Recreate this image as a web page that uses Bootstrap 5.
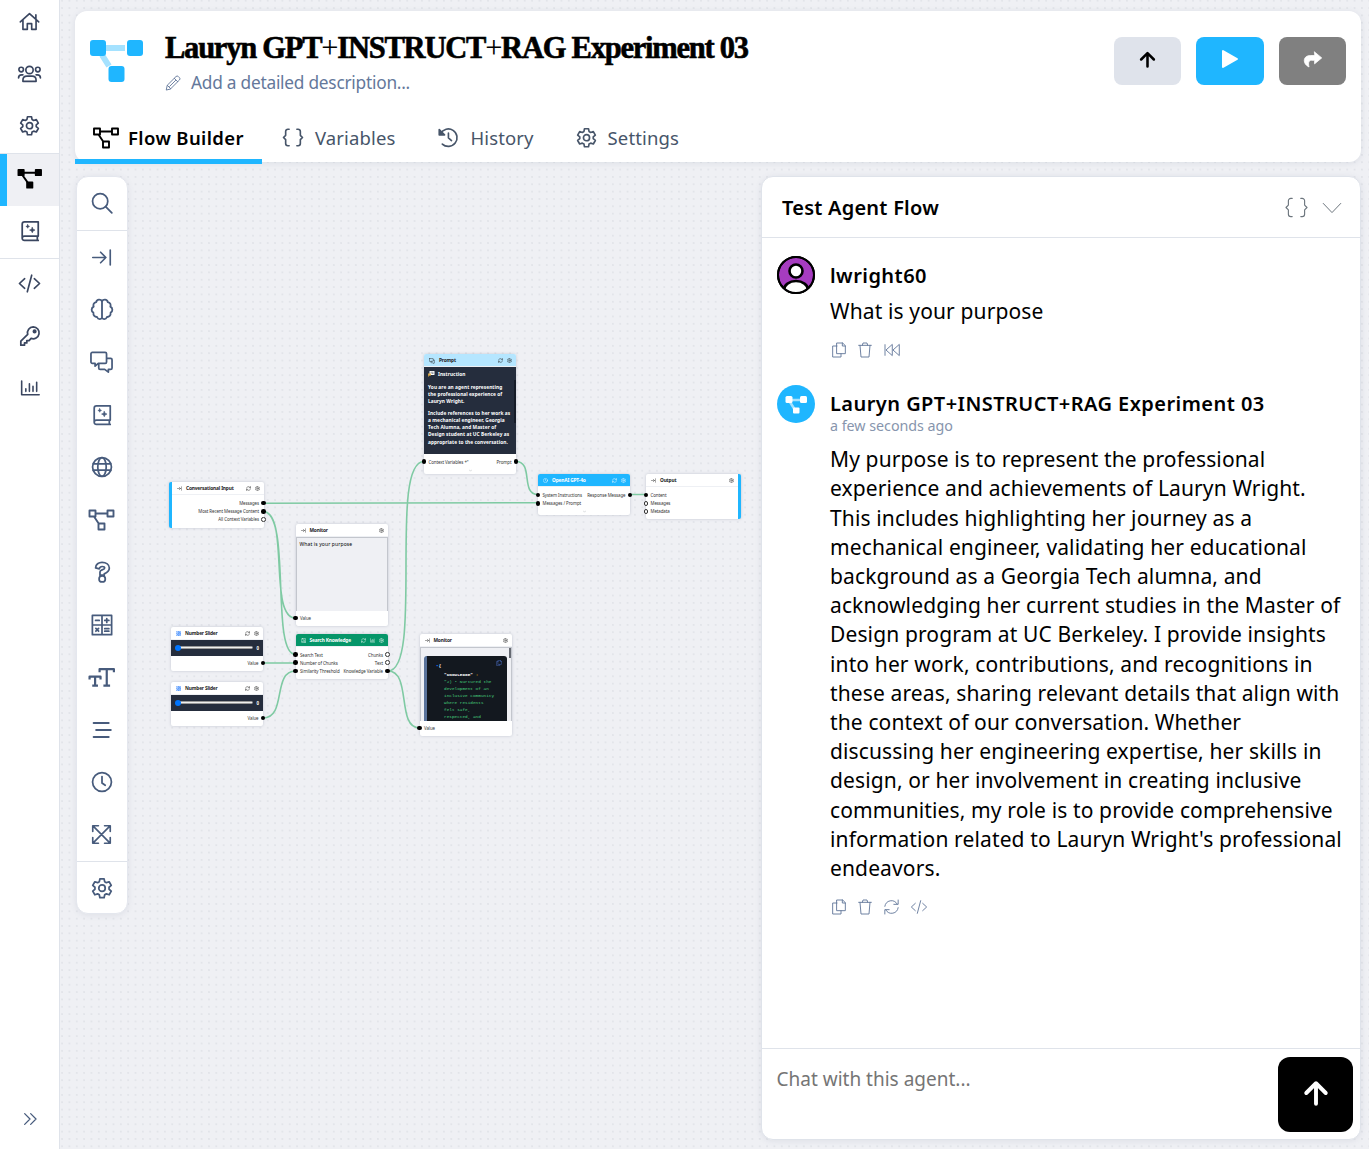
<!DOCTYPE html>
<html lang="en">
<head>
<meta charset="utf-8">
<title>Agent Flow Builder</title>
<link href="https://cdn.jsdelivr.net/npm/bootstrap@5.3.0/dist/css/bootstrap.min.css" rel="stylesheet">
<style>
  :root { --sky: #1fb6ff; --ink: #475569; --line: #dfe3ea; --canvas: #eff0f4; }
  body { font-family: "Noto Sans", Roboto, sans-serif; color: #000; height: 1149px; overflow: hidden; background: var(--canvas); }
  svg.ico { fill: none; stroke: currentColor; stroke-width: 1.6; stroke-linejoin: round; stroke-linecap: round; flex: none; display: block; }
  .fit { white-space: nowrap; }

  .side-nav { width: 60px; border-right: 1px solid var(--line); color: #3a4660; }
  .side-nav svg.ico, .palette svg.ico { stroke-width: 1.9; }
  .side-list { margin-top: -3px; }
  .side-item { height: 52px; padding-bottom: 3px; }
  .side-item.is-active { background: var(--canvas); color: #000; box-shadow: inset 7px 0 0 var(--sky); }
  .side-rule { height: 1px; background: var(--line); }
  .side-more { height: 60px; color: #475b7c; }

  .workspace { background-image: radial-gradient(circle, #e1e3e8 0, #e3e5ea .8px, transparent 1.4px); background-size: 7.35px 7.35px; background-position: -1.6px -3px; padding: 11px 8px 9px 15px; gap: 14px; }
  .head-card { height: 151px; border-radius: 12px; box-shadow: 0 1px 6px rgba(100,110,140,.14); }
  .head-main { padding: 17px 0 0 15px; }
  .flow-logo { margin: 11px 21px 0 0; }
  .flow-title { font-family: "Liberation Serif", serif; font-weight: 700; font-size: 30.5px; line-height: 40px; letter-spacing: -1.23px; -webkit-text-stroke: .6px #000; }
  .flow-title i { font-style: normal; font-weight: 400; -webkit-text-stroke: 0; }
  .flow-sub { font-size: 17.3px; line-height: 26px; letter-spacing: -.24px; color: #64789b; gap: 10px; margin-top: 2px; }
  .flow-sub svg.ico { stroke-width: 1.4; }
  .acts { gap: 15px; padding: 26px 15px 0 0; }
  .act { width: 67px; height: 48px; border-radius: 8px; }
  .act-up { background: #dfe3eb; }
  .act-run { background: var(--sky); width: 68px; }
  .act-share { background: #808080; }
  .tabs-row { margin-bottom: -2px; }
  .tab-link { height: 53px; font-size: 18.5px; letter-spacing: .12px; color: var(--ink); gap: 9px; padding-left: 18px; }
  .tab-link svg.ico { stroke-width: 1.9; }
  .tab-link.is-active { color: #000; font-weight: 600; letter-spacing: .39px; width: 187px; box-shadow: inset 0 -5px 0 var(--sky); }
  .tab-hist { padding-left: 42px; gap: 11px; }
  .tab-set { padding-left: 42px; gap: 11px; }

  .palette { width: 52px; margin-left: .5px; border: 1px solid #e4e7ee; border-radius: 12px; color: #475b7c; box-shadow: 0 1px 6px rgba(100,110,140,.12); height: 738px; }
  .palette > div { height: 52.5px; }
  .palette .edge-top { border-bottom: 1px solid var(--line); height: 54px; padding-bottom: 1px; }
  .palette .edge-end { border-top: 1px solid var(--line); height: 53px; }

  .chat { width: 600px; border: 1px solid var(--line); border-radius: 12px; box-shadow: 0 1px 6px rgba(100,110,140,.12); }
  .chat-head { height: 61px; border-bottom: 1px solid var(--line); font-size: 20px; font-weight: 600; letter-spacing: .23px; padding: 1px 18px 0 20px; }
  .chat-head svg.ico { stroke-width: 1.2; }
  .chat-log { padding: 18px 0 0 15px; }
  .turn { padding: 6px 0 0 15px; }
  .turn + .turn, .reply { margin-top: 27px; }
  .who { font-size: 20px; font-weight: 600; line-height: 28px; letter-spacing: .45px; }
  .said { font-size: 21px; line-height: 29.2px; letter-spacing: .13px; margin-top: 7px; }
  .reply .turn { padding-top: 5px; }
  .ago { font-size: 14.3px; line-height: 18px; letter-spacing: -.03px; color: #8795ad; margin-top: -1px; }
  .reply .said { margin-top: 10px; }
  .tools { color: #64789b; gap: 10px; margin-top: 16px; padding-left: 1px; }
  .tools svg.ico { stroke-width: 1.4; }
  .avatar { width: 38px; height: 38px; }
  .composer { height: 91px; border-top: 1px solid var(--line); padding: 8px 7px 6px 14.5px; font-size: 19px; color: #757575; }
  .send { width: 75px; height: 75px; border-radius: 12px; background: #000; color: #fff; }

  .board { left: 0; top: 0; width: 1369px; height: 1149px; pointer-events: none; }
  .wires { fill: none; stroke: #7fcaa3; stroke-width: 1.6; }
  .node { position: absolute; background: #fff; border-radius: 2px; box-shadow: 0 0 3px rgba(80,90,120,.28); font-size: 4.4px; line-height: 8.2px; letter-spacing: -.07px; width: 92px; }
  .node svg.ico { stroke-width: 2; }
  .node-h { height: 13px; font-weight: 700; font-size: 4.8px; letter-spacing: -.15px; padding: 1px 4px 0 5px; gap: 4px; border-bottom: .5px solid #eef0f4; border-radius: 2px 2px 0 0; color: #222; }
  .node-rows { padding-top: 4px; }
  .node-r { height: 8.2px; padding: 0 4.5px; position: relative; white-space: nowrap; color: #333; }
  .node-foot { margin-top: 3.5px; }
  .node-more { margin-top: 3px; }
  .pin { position: absolute; width: 4.6px; height: 4.6px; border-radius: 50%; background: #000; top: 1.8px; }
  .pin.l { left: -2.3px; } .pin.r { right: -2.3px; }
  .pin.o { background: #fff; border: .8px solid #333; }
  .track { height: 3px; border-radius: 2px; background: #efefef; border: .5px solid #999; }
  .knob { width: 6px; height: 6px; border-radius: 50%; background: #0075ff; margin-right: -3px; z-index: 1; }
  .darkbox { background: #252d3d; color: #fff; }
  .slider-bar { height: 15.5px; padding: 0 4px; }
  .view { height: 74px; background: #eff0f4; border: 1px solid #c3c6cd; border-bottom: 0; }
  .view-text { padding: 2.5px 3px; font-size: 5px; letter-spacing: .13px; }
  .view-json { padding: 8.5px 3.5px 0; }
  .json-box { background: #13181f; border-left: 3px solid #5a739b; border-radius: 3px 3px 0 0; height: 66px; padding: 6px 0 0 9px; }
  .json-copy { right: 5px; top: 4px; color: #4b6cc0; }
  .thumb-json { right: 0; top: 0; width: 2px; height: 10px; background: #666a72; }
  .prompt-box { height: 87px; padding: 3.5px 4px; line-height: 7.25px; font-size: 4.8px; letter-spacing: .06px; }
  .prompt-cap { gap: 3.5px; margin-bottom: 6px; }
  .thumb-prompt { right: 0; top: 13px; width: 2px; height: 43px; background: #151b27; }
  .mono { font-family: "Liberation Mono", monospace; font-size: 4.4px; line-height: 7.15px; letter-spacing: 0; color: #46cf7c; white-space: nowrap; }
  .mono-key { line-height: 8.5px; }

  .n-input { left: 169px; top: 482px; width: 94.5px; height: 45.5px; border-left: 3px solid var(--sky); }
  .n-mon1 { left: 295.5px; top: 523.5px; height: 102.5px; }
  .n-sl1 { left: 171px; top: 627px; height: 44px; }
  .n-sl2 { left: 171px; top: 682px; height: 44px; }
  .n-know { left: 295.5px; top: 633.5px; height: 45.5px; }
  .n-know .node-h { background: #059669; color: #fff; }
  .n-prompt { left: 424px; top: 354px; height: 120px; }
  .n-prompt .node-h { background: #b5e6ff; }
  .n-gpt { left: 538px; top: 474px; height: 41px; }
  .n-gpt .node-h { background: var(--sky); color: #fff; }
  .n-out { left: 646px; top: 474px; width: 95px; height: 45px; border-right: 3px solid var(--sky); }
  .n-mon2 { left: 419.5px; top: 633.5px; height: 102.5px; }
</style>
</head>
<body>
<svg width="0" height="0" class="position-absolute">
  <symbol id="home" viewBox="0 0 24 24"><path d="M1.500 12.500 12 3l10.500 9.500M4.500 10.500V21h5v-6.500h5V21h5V10.500M19.300 9V4.500"/></symbol>
  <symbol id="users" viewBox="0 0 27 24"><circle cx="13.500" cy="8" r="4.200"/><circle cx="4" cy="7.500" r="2.600"/><circle cx="23" cy="7.500" r="2.600"/><path d="M6 21v-1.500c0-3 2-4.500 4.500-4.500h6c2.500 0 4.500 1.500 4.500 4.500V21zM1 17c0-2.300 1.400-3.500 3.500-3.500H6M26 17c0-2.300-1.400-3.500-3.500-3.500H21"/></symbol>
  <symbol id="gear" viewBox="0 0 24 24"><path d="M9.700 2h4.600l.6 3.100 1.900 1.100 3-1 2.300 4-2.400 2v2.200l2.400 2-2.300 4-3-1-1.900 1.100-.6 3.100H9.700l-.6-3.100-1.900-1.100-3 1-2.300-4 2.400-2v-2.200l-2.400-2 2.300-4 3 1 1.900-1.100z"/><circle cx="12" cy="12.200" r="3.500"/></symbol>
  <symbol id="flow" viewBox="0 0 26 22"><path d="M1 1.500h6v6H1zM19 1.500h6v6h-6zM10 14.500h6v6h-6zM7 4.500h12M5.500 7.500l5 7.500"/></symbol>
  <symbol id="flowfill" viewBox="0 0 26 22"><path d="M7 4.500h12M6 7.500l5 7"/><path fill="currentColor" d="M1.500 1.500h5.500v5.500H1.500zM19.500 1.500H25v5.500h-5.500zM10.500 14.500H16V20h-5.500z"/></symbol>
  <symbol id="book" viewBox="0 0 24 24"><path d="M6 2h15v15.500H6A2.500 2.500 0 0 0 3.500 20V4.500A2.500 2.500 0 0 1 6 2zM3.500 20A2.300 2.300 0 0 0 6 22.300h15M20 17.500v4.800"/><path fill="currentColor" stroke-width=".6" d="m14.500 8 .9 2.100 2.100.9-2.100.9-.9 2.100-.9-2.100-2.100-.9 2.100-.9zM9.500 5l.6 1.400 1.400.6-1.400.6L9.500 9l-.6-1.400L7.500 7l1.400-.6z"/></symbol>
  <symbol id="code" viewBox="0 0 26 24"><path d="M7.500 6.500 1.500 12l6 5.500M18.500 6.500l6 5.500-6 5.500M15.500 2.500l-5 19"/></symbol>
  <symbol id="key" viewBox="0 0 24 24"><path d="M15.500 2a6.500 6.500 0 1 1-2.300 12.600L11 17H8.500v2.500H6V22H2v-4.500l7.500-7.300A6.500 6.500 0 0 1 15.500 2z"/><circle cx="17" cy="7" r="1.300" fill="currentColor"/></symbol>
  <symbol id="chart" viewBox="0 0 24 24"><path d="M2 3.500V20h21M7 16v-3M11.300 16V7M15.600 16v-6M20 16V5"/></symbol>
  <symbol id="chev2" viewBox="0 0 24 24"><path d="m4 4 8 8-8 8M13 4l8 8-8 8"/></symbol>
  <symbol id="pencil" viewBox="0 0 24 24"><path d="m2 22 1.300-6.500L16.500 2.300a2.500 2.500 0 0 1 3.500 0l1.700 1.700a2.500 2.500 0 0 1 0 3.500L8.500 20.700zM3.500 15.500l5 5M14 5l5 5M7 17l9-9"/></symbol>
  <symbol id="braces" viewBox="0 0 26 22"><path d="M8.500 1.500H7A2.500 2.500 0 0 0 4.500 4v4.500L2 11l2.500 2.500V18A2.500 2.500 0 0 0 7 20.500h1.500M17.500 1.500H19A2.500 2.500 0 0 1 21.500 4v4.500L24 11l-2.500 2.500V18a2.500 2.500 0 0 1-2.500 2.500h-1.500"/></symbol>
  <symbol id="history" viewBox="0 0 24 24"><path d="M3.500 7.500A10 10 0 1 1 5.500 19.500M12.500 7v5.500l3.500 3"/><path fill="currentColor" d="M2 3v6h6z"/></symbol>
  <symbol id="search" viewBox="0 0 24 24"><circle cx="10" cy="10" r="8.300"/><path d="m16 16 6.700 6.700"/></symbol>
  <symbol id="arrowend" viewBox="0 0 24 24"><path d="M2 12h15M11 6l6 6-6 6M22 3.500v17"/></symbol>
  <symbol id="brain" viewBox="0 0 24 24"><path d="M12 3.500v17M12 3.500C11 1 6.500 1 6 4.200 3.200 4.700 2.500 7 3.300 9 .5 10.500.6 14 3 15.300c-.3 3 1.600 4.600 3.800 4.500C8 22.800 11.500 22.500 12 20.500c.5 2 4 2.300 5.200-.7 2.200.1 4.100-1.500 3.800-4.500 2.400-1.300 2.500-4.800-.3-6.300.8-2 .1-4.300-2.700-4.800C17.500 1 13 1 12 3.500z"/></symbol>
  <symbol id="chats" viewBox="0 0 26 24"><path d="M3 1.500h14a1.500 1.500 0 0 1 1.500 1.500v9a1.500 1.500 0 0 1-1.500 1.500H9.500L6 16.500v-3H3A1.500 1.500 0 0 1 1.500 12V3A1.500 1.500 0 0 1 3 1.500zM18.500 8H23a1.500 1.500 0 0 1 1.500 1.500v9A1.500 1.500 0 0 1 23 20h-2.500v3l-4-3H11.500a1.500 1.500 0 0 1-1.500-1.500v-5"/></symbol>
  <symbol id="globe" viewBox="0 0 24 24"><circle cx="12" cy="12" r="10.300"/><ellipse cx="12" cy="12" rx="4.600" ry="10.300"/><path d="M2.500 8.500h19M2.500 15.500h19"/></symbol>
  <symbol id="quest" viewBox="0 0 24 24"><path d="M5 7.500C5 3.500 8.500 1.500 12 1.500c4.500 0 8 2.500 8 6.200 0 3.200-2 4.800-5.500 6.300v1.500h-4.700V12c0-1.300 1-1.800 2.300-2.300 2-.7 2.800-1.200 2.800-2 0-1-1.200-1.700-2.700-1.700-1.600 0-2.700.7-3.200 2.500z"/><circle cx="12.200" cy="19.500" r="3.400"/></symbol>
  <symbol id="calc" viewBox="0 0 24 24"><path d="M1.500 1.500h21v21h-21zM12 1.500v21M1.500 12h21M5 7h4M15 7h4.500M17.200 5v4.200M5.300 15.800l3 3M8.300 15.800l-3 3M15 16h4.500M15 18.700h4.500"/></symbol>
  <symbol id="texts" viewBox="0 0 28 22"><path stroke-width="2.300" stroke-linecap="butt" d="M12 5.500V2.200h15v3.300M19.500 2v17.500M16 19.500h7M1.500 13v-3H13v3M7.300 10v9.500M4.300 19.500h6"/></symbol>
  <symbol id="bars" viewBox="0 0 24 24"><path stroke-width="2.400" d="M2 3.500h18M5 12h17.500M2 20.500h18"/></symbol>
  <symbol id="clock" viewBox="0 0 24 24"><circle cx="12" cy="12" r="10.300"/><path d="M12 6v7l3.500 2.500"/></symbol>
  <symbol id="expand" viewBox="0 0 24 24"><path d="M2 8.500V2h6.500M15.500 2H22v6.500M22 15.500V22h-6.500M8.500 22H2v-6.500M2.500 2.500l19 19M21.500 2.500l-19 19"/></symbol>
  <symbol id="chev" viewBox="0 0 24 24"><path d="m1.500 6.500 10.500 11L22.500 6.500"/></symbol>
  <symbol id="copy" viewBox="0 0 24 24"><path d="M9 1.500h8.500l4 4V17.500H9zM17 1.500V6h4.500M9 6H2.500v16.500H15v-5"/></symbol>
  <symbol id="trash" viewBox="0 0 24 24"><path d="M2.500 5h19M8 5l1-3.500h6L16 5M4.500 5 6 22.500h12L19.500 5"/></symbol>
  <symbol id="rew" viewBox="0 0 24 24"><path d="M1.500 4v16M12 4l-9 8 9 8zM22.500 4l-9 8 9 8z"/></symbol>
  <symbol id="sync" viewBox="0 0 24 24"><path d="M2 11A10 10 0 0 1 20.500 7.500M22 1.500V8h-6.500M22 13A10 10 0 0 1 3.500 16.500M2 22.500V16h6.500"/></symbol>
  <symbol id="up" viewBox="0 0 24 24"><path stroke-width="3.600" d="M12 22V3.500M3 12l9-9 9 9"/></symbol>
  <symbol id="share" viewBox="0 0 24 24"><path fill="currentColor" stroke-width="1" d="M14 2.500 23 10l-9 7.500V13H10c-3 0-4.500 2.500-3 8.500C3 19.500 1 16.500 1 13.500 1 9 4.500 7 9 7h5z"/></symbol>
</svg>

<div class="d-flex h-100">
  <nav class="side-nav bg-white d-flex flex-column justify-content-between flex-shrink-0">
    <div class="side-list">
      <div class="side-item d-flex align-items-center justify-content-center"><svg class="ico" width="23" height="21"><use href="#home"/></svg></div>
      <div class="side-item d-flex align-items-center justify-content-center"><svg class="ico" width="25" height="21"><use href="#users"/></svg></div>
      <div class="side-item d-flex align-items-center justify-content-center"><svg class="ico" width="21" height="21"><use href="#gear"/></svg></div>
      <div class="side-rule"></div>
      <div class="side-item is-active d-flex align-items-center justify-content-center"><svg class="ico" width="25" height="22"><use href="#flowfill"/></svg></div>
      <div class="side-item d-flex align-items-center justify-content-center"><svg class="ico" width="22" height="22"><use href="#book"/></svg></div>
      <div class="side-rule"></div>
      <div class="side-item d-flex align-items-center justify-content-center"><svg class="ico" width="23" height="21"><use href="#code"/></svg></div>
      <div class="side-item d-flex align-items-center justify-content-center"><svg class="ico" width="22" height="22"><use href="#key"/></svg></div>
      <div class="side-item d-flex align-items-center justify-content-center"><svg class="ico" width="22" height="20"><use href="#chart"/></svg></div>
    </div>
    <div class="side-more d-flex align-items-center justify-content-center"><svg class="ico" width="16" height="16"><use href="#chev2"/></svg></div>
  </nav>

  <main class="workspace flex-grow-1 d-flex flex-column position-relative">
    <header class="head-card bg-white d-flex flex-column justify-content-between">
      <div class="d-flex justify-content-between">
        <div class="head-main d-flex">
          <svg class="flow-logo flex-shrink-0" width="54" height="44"><g stroke="#a5e2ff" stroke-width="6"><path d="M14 9h21M12 16l7 11"/></g><g fill="#1fb6ff"><rect y="1" width="16" height="16" rx="3"/><rect x="37" y="1" width="16" height="16" rx="3"/><rect x="18.500" y="27" width="16" height="16" rx="3"/></g></svg>
          <div>
            <div class="flow-title"><span class="fit">Lauryn GPT<i>+</i>INSTRUCT<i>+</i>RAG Experiment 03</span></div>
            <div class="flow-sub d-flex align-items-center"><svg class="ico" width="16" height="16"><use href="#pencil"/></svg><span class="fit">Add a detailed description...</span></div>
          </div>
        </div>
        <div class="acts d-flex">
          <div class="act act-up d-flex align-items-center justify-content-center pb-1"><svg class="ico" width="17" height="17"><use href="#up"/></svg></div>
          <div class="act act-run d-flex align-items-center justify-content-center pb-1"><svg width="18" height="20"><path d="M2 2v16l14-8z" fill="#fff" stroke="#fff" stroke-width="2" stroke-linejoin="round"/></svg></div>
          <div class="act act-share d-flex align-items-center justify-content-center pb-1 text-white"><svg class="ico" width="20" height="19"><use href="#share"/></svg></div>
        </div>
      </div>
      <div class="tabs-row d-flex">
        <div class="tab-link is-active d-flex align-items-center"><svg class="ico" width="26" height="22"><use href="#flow"/></svg><span class="fit">Flow Builder</span></div>
        <div class="tab-link d-flex align-items-center"><svg class="ico" width="26" height="19"><use href="#braces"/></svg><span class="fit">Variables</span></div>
        <div class="tab-link tab-hist d-flex align-items-center"><svg class="ico" width="22" height="21"><use href="#history"/></svg><span class="fit">History</span></div>
        <div class="tab-link tab-set d-flex align-items-center"><svg class="ico" width="21" height="21"><use href="#gear"/></svg><span class="fit">Settings</span></div>
      </div>
    </header>

    <section class="d-flex justify-content-between flex-grow-1">
      <div class="palette bg-white">
        <div class="edge-top d-flex align-items-center justify-content-center"><svg class="ico" width="22" height="22"><use href="#search"/></svg></div>
        <div class="d-flex align-items-center justify-content-center"><svg class="ico" width="21" height="21"><use href="#arrowend"/></svg></div>
        <div class="d-flex align-items-center justify-content-center"><svg class="ico" width="24" height="23"><use href="#brain"/></svg></div>
        <div class="d-flex align-items-center justify-content-center"><svg class="ico" width="25" height="22"><use href="#chats"/></svg></div>
        <div class="d-flex align-items-center justify-content-center"><svg class="ico" width="22" height="22"><use href="#book"/></svg></div>
        <div class="d-flex align-items-center justify-content-center"><svg class="ico" width="22" height="22"><use href="#globe"/></svg></div>
        <div class="d-flex align-items-center justify-content-center"><svg class="ico" width="27" height="22"><use href="#flow"/></svg></div>
        <div class="d-flex align-items-center justify-content-center"><svg class="ico" width="22" height="22"><use href="#quest"/></svg></div>
        <div class="d-flex align-items-center justify-content-center"><svg class="ico" width="22" height="22"><use href="#calc"/></svg></div>
        <div class="d-flex align-items-center justify-content-center"><svg class="ico" width="27" height="21"><use href="#texts"/></svg></div>
        <div class="d-flex align-items-center justify-content-center"><svg class="ico" width="22" height="20"><use href="#bars"/></svg></div>
        <div class="d-flex align-items-center justify-content-center"><svg class="ico" width="22" height="22"><use href="#clock"/></svg></div>
        <div class="d-flex align-items-center justify-content-center"><svg class="ico" width="21" height="21"><use href="#expand"/></svg></div>
        <div class="edge-end d-flex align-items-center justify-content-center"><svg class="ico" width="22" height="22"><use href="#gear"/></svg></div>
      </div>

      <aside class="chat bg-white d-flex flex-column overflow-hidden">
        <div class="chat-head d-flex align-items-center justify-content-between">
          <span class="fit">Test Agent Flow</span>
          <span class="d-flex align-items-center gap-2 text-secondary"><svg class="ico me-1" width="27" height="21"><use href="#braces"/></svg><svg class="ico" width="20" height="20"><use href="#chev"/></svg></span>
        </div>
        <div class="chat-log flex-grow-1">
          <div class="d-flex">
            <svg class="avatar flex-shrink-0" viewBox="0 0 38 38"><defs><clipPath id="face"><circle cx="19" cy="19" r="17.500"/></clipPath></defs><circle cx="19" cy="19" r="18" fill="#a63cc0" stroke="#000" stroke-width="2"/><g clip-path="url(#face)" fill="#fff" stroke="#000" stroke-width="2.600"><ellipse cx="19" cy="34" rx="12" ry="9"/><circle cx="19" cy="15" r="6.500"/></g><circle cx="19" cy="19" r="18" fill="none" stroke="#000" stroke-width="2"/></svg>
            <div class="turn">
              <div class="who"><span class="fit">lwright60</span></div>
              <div class="said"><span class="fit">What is your purpose</span></div>
              <div class="tools d-flex"><svg class="ico" width="16" height="16"><use href="#copy"/></svg><svg class="ico" width="16" height="16"><use href="#trash"/></svg><svg class="ico" width="18" height="16"><use href="#rew"/></svg></div>
            </div>
          </div>
          <div class="reply d-flex">
            <svg class="avatar flex-shrink-0" viewBox="0 0 38 38"><circle cx="19" cy="19" r="19" fill="#1fb6ff"/><path d="M14 15h11M13 17l5 8" stroke="#a5e2ff" stroke-width="2.500"/><g fill="#fff"><rect x="8.500" y="11" width="7" height="7" rx="1.500"/><rect x="23" y="11" width="7" height="7" rx="1.500"/><rect x="16" y="22.500" width="6.500" height="6" rx="1"/></g></svg>
            <div class="turn">
              <div class="who"><span class="fit">Lauryn GPT+INSTRUCT+RAG Experiment 03</span></div>
              <div class="ago"><span class="fit">a few seconds ago</span></div>
              <div class="said fit">My purpose is to represent the professional<br>
                experience and achievements of Lauryn Wright.<br>
                This includes highlighting her journey as a<br>
                mechanical engineer, validating her educational<br>
                background as a Georgia Tech alumna, and<br>
                acknowledging her current studies in the Master of<br>
                Design program at UC Berkeley. I provide insights<br>
                into her work, contributions, and recognitions in<br>
                these areas, sharing relevant details that align with<br>
                the context of our conversation. Whether<br>
                discussing her engineering expertise, her skills in<br>
                design, or her involvement in creating inclusive<br>
                communities, my role is to provide comprehensive<br>
                information related to Lauryn Wright's professional<br>
                endeavors.</div>
              <div class="tools d-flex"><svg class="ico" width="16" height="16"><use href="#copy"/></svg><svg class="ico" width="16" height="16"><use href="#trash"/></svg><svg class="ico" width="17" height="16"><use href="#sync"/></svg><svg class="ico" width="18" height="16"><use href="#code"/></svg></div>
            </div>
          </div>
        </div>
        <div class="composer d-flex justify-content-between">
          <span class="fit pt-2">Chat with this agent...</span>
          <div class="send d-flex align-items-center justify-content-center pb-1"><svg class="ico" width="26" height="26"><use href="#up"/></svg></div>
        </div>
      </aside>
    </section>
  </main>
</div>

<!-- Flow canvas -->
<div class="board position-absolute">
  <svg class="wires position-absolute" width="760" height="800">
    <path d="M263 503.300L538 502.700M263 511.500C290 511.500 268 618 295.500 618M263 511.500C292 511.500 270 654.500 295.500 654.500M263 663H295.500M263 718C287 718 272 671 295.500 671M388 671C424 671 388 461.500 424 461.500M388 671C412 671 396 728 419.500 728M516 461.500C534 461.500 520 494.500 538 494.500M630 494.500H646"/>
  </svg>

  <div class="node n-input">
    <div class="node-h d-flex align-items-center"><svg class="ico" width="5" height="5"><use href="#arrowend"/></svg><span class="fit me-auto">Conversational Input</span><svg class="ico" width="5" height="5"><use href="#sync"/></svg><svg class="ico" width="5" height="5"><use href="#gear"/></svg></div>
    <div class="node-rows">
      <div class="node-r text-end">Messages<i class="pin r"></i></div>
      <div class="node-r text-end">Most Recent Message Content<i class="pin r"></i></div>
      <div class="node-r text-end">All Context Variables<i class="pin r o"></i></div>
    </div>
  </div>

  <div class="node n-mon1">
    <div class="node-h d-flex align-items-center"><svg class="ico" width="5" height="5"><use href="#arrowend"/></svg><span class="fit me-auto">Monitor</span><svg class="ico" width="5" height="5"><use href="#gear"/></svg></div>
    <div class="view view-text">What is your purpose</div>
    <div class="node-r node-foot"><i class="pin l"></i>Value</div>
  </div>

  <div class="node n-sl1">
    <div class="node-h d-flex align-items-center"><svg class="ico text-primary" width="5" height="5"><use href="#calc"/></svg><span class="fit me-auto">Number Slider</span><svg class="ico" width="5" height="5"><use href="#sync"/></svg><svg class="ico" width="5" height="5"><use href="#gear"/></svg></div>
    <div class="darkbox slider-bar d-flex align-items-center fw-bold"><span class="knob"></span><span class="track flex-grow-1 me-1"></span>0</div>
    <div class="node-r node-foot text-end">Value<i class="pin r"></i></div>
  </div>
  <div class="node n-sl2">
    <div class="node-h d-flex align-items-center"><svg class="ico text-primary" width="5" height="5"><use href="#calc"/></svg><span class="fit me-auto">Number Slider</span><svg class="ico" width="5" height="5"><use href="#sync"/></svg><svg class="ico" width="5" height="5"><use href="#gear"/></svg></div>
    <div class="darkbox slider-bar d-flex align-items-center fw-bold"><span class="knob"></span><span class="track flex-grow-1 me-1"></span>0</div>
    <div class="node-r node-foot text-end">Value<i class="pin r"></i></div>
  </div>

  <div class="node n-know">
    <div class="node-h d-flex align-items-center"><svg class="ico" width="5" height="5"><use href="#book"/></svg><span class="fit me-auto">Search Knowledge</span><svg class="ico" width="5" height="5"><use href="#sync"/></svg><svg class="ico" width="5" height="5"><use href="#chart"/></svg><svg class="ico" width="5" height="5"><use href="#gear"/></svg></div>
    <div class="node-rows">
      <div class="node-r d-flex justify-content-between"><i class="pin l"></i><span>Search Text</span><span>Chunks</span><i class="pin r o"></i></div>
      <div class="node-r d-flex justify-content-between"><i class="pin l"></i><span>Number of Chunks</span><span>Text</span><i class="pin r o"></i></div>
      <div class="node-r d-flex justify-content-between"><i class="pin l"></i><span>Similarity Threshold</span><span>Knowledge Variable</span><i class="pin r"></i></div>
    </div>
  </div>

  <div class="node n-prompt">
    <div class="node-h d-flex align-items-center"><svg class="ico" width="6" height="6"><use href="#chats"/></svg><span class="fit me-auto">Prompt</span><svg class="ico" width="5" height="5"><use href="#sync"/></svg><svg class="ico" width="5" height="5"><use href="#gear"/></svg></div>
    <div class="darkbox prompt-box fw-bold position-relative fit">
      <div class="prompt-cap d-flex align-items-center"><svg width="6.500" height="6" viewBox="0 0 13 12"><rect x="3" width="10" height="8" rx="1" fill="#fff"/><path d="M0 5h6v4H3l-2 3z" fill="#e9b44c"/><path d="M5 2.500h6M7 5h4" stroke="#252d3d"/></svg><span>Instruction</span></div>
      <div class="mb-1 pb-0">You are an agent representing<br>the professional experience of<br>Lauryn Wright.</div>
      <div>Include references to her work as<br>a mechanical engineer, Georgia<br>Tech Alumna, and Master of<br>Design student at UC Berkeley as<br>appropriate to the conversation.</div>
      <span class="thumb-prompt position-absolute"></span>
    </div>
    <div class="node-r node-foot d-flex justify-content-between"><i class="pin l"></i><span>Context Variables +"</span><span>Prompt</span><i class="pin r"></i></div>
    <svg class="ico node-more mx-auto text-secondary" width="3" height="3"><use href="#chev"/></svg>
  </div>

  <div class="node n-gpt">
    <div class="node-h d-flex align-items-center"><svg class="ico" width="5" height="5"><use href="#clock"/></svg><span class="fit me-auto">OpenAI GPT-4o</span><svg class="ico" width="5" height="5"><use href="#sync"/></svg><svg class="ico" width="5" height="5"><use href="#gear"/></svg></div>
    <div class="node-rows">
      <div class="node-r d-flex justify-content-between"><i class="pin l"></i><span>System Instructions</span><span>Response Message</span><i class="pin r"></i></div>
      <div class="node-r"><i class="pin l"></i>Messages / Prompt</div>
    </div>
    <svg class="ico node-more mx-auto text-secondary" width="3" height="3"><use href="#chev"/></svg>
  </div>

  <div class="node n-out">
    <div class="node-h d-flex align-items-center"><svg class="ico" width="5" height="5"><use href="#arrowend"/></svg><span class="fit me-auto">Output</span><svg class="ico" width="5" height="5"><use href="#gear"/></svg></div>
    <div class="node-rows">
      <div class="node-r"><i class="pin l"></i>Content</div>
      <div class="node-r"><i class="pin l o"></i>Messages</div>
      <div class="node-r"><i class="pin l o"></i>Metadata</div>
    </div>
  </div>

  <div class="node n-mon2">
    <div class="node-h d-flex align-items-center"><svg class="ico" width="5" height="5"><use href="#arrowend"/></svg><span class="fit me-auto">Monitor</span><svg class="ico" width="5" height="5"><use href="#gear"/></svg></div>
    <div class="view view-json position-relative overflow-hidden">
      <div class="json-box mono position-relative">
        <div class="mono-key text-white fw-bold"><span class="text-primary">▾</span>{</div>
        <div class="ps-2"><b class="text-light">"KNOWLEDGE"</b> <b class="text-warning">:</b><br>"2) • Nurtured the<br>development of an<br>inclusive community<br>where residents<br>felt safe,<br>respected, and</div>
        <svg class="ico json-copy position-absolute" width="6" height="6"><use href="#copy"/></svg>
      </div>
      <span class="thumb-json position-absolute"></span>
    </div>
    <div class="node-r node-foot"><i class="pin l"></i>Value</div>
  </div>
</div>
<script src="https://cdn.jsdelivr.net/npm/bootstrap@5.3.0/dist/js/bootstrap.bundle.min.js"></script>
</body>
</html>
